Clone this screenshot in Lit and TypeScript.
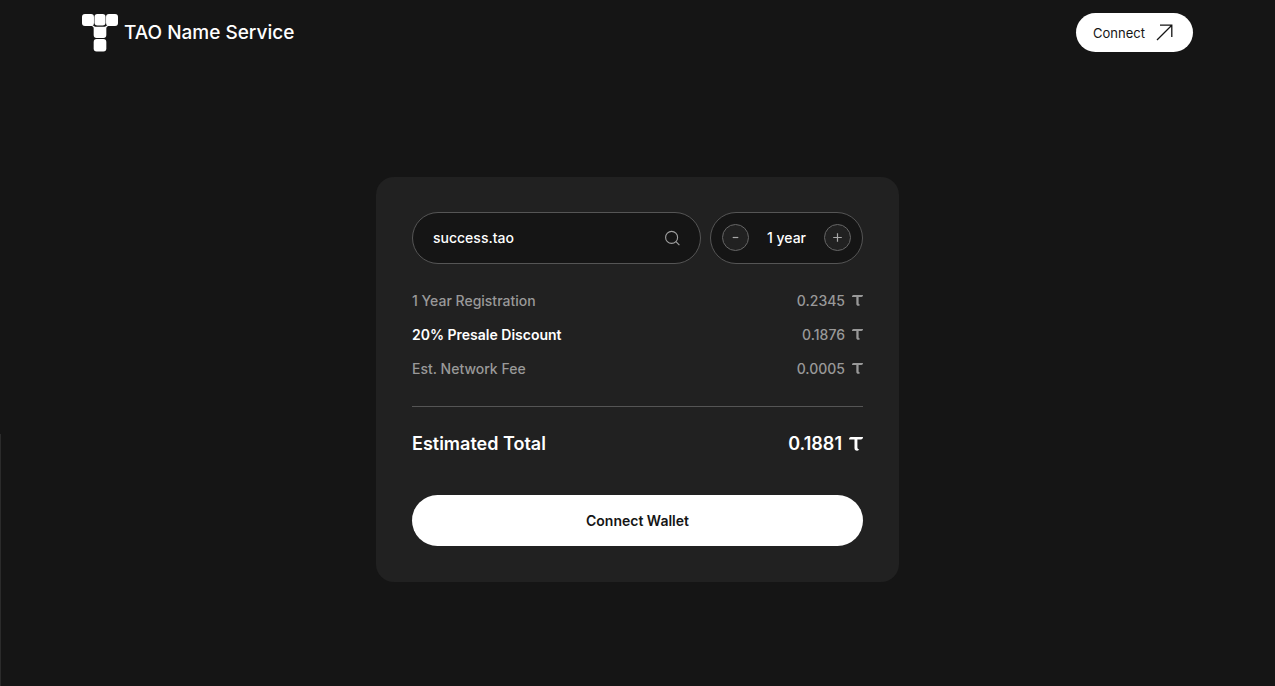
import { LitElement, html, css, svg } from "lit";
import { customElement, property, state } from "lit/decorators.js";
import { classMap } from "lit/directives/class-map.js";

interface PriceLine {
  label: string;
  amount: string;
  strong?: boolean;
}

const LINES: PriceLine[] = [
  { label: "1 Year Registration", amount: "0.2345" },
  { label: "20% Presale Discount", amount: "0.1876", strong: true },
  { label: "Est. Network Fee", amount: "0.0005" },
];

@customElement("tao-symbol")
export class TaoSymbol extends LitElement {
  @property({ type: Number }) size = 11;

  static styles = css`
    :host {
      display: flex;
    }
  `;

  render() {
    return html`<svg width=${this.size} height=${this.size} viewBox="0 0 14 14" fill="currentColor" role="img" aria-label="TAO">
      <path d="M1.8 0H14C14 1.5 13.2 2.4 11.9 2.4H8.4V10.2C8.4 11.500 8.900 12.200 10.300 12.300C9.800 13.200 9.200 13.700 8.100 13.700C6.400 13.700 5.500 12.700 5.500 11V2.400H0C0 .9.7 0 1.8 0Z" />
    </svg>`;
  }
}

@customElement("site-header")
export class SiteHeader extends LitElement {
  static styles = css`
    :host {
      display: block;
    }
    .bar {
      display: flex;
      align-items: center;
      justify-content: space-between;
      padding: 13px 82px;
    }
    .brand {
      display: flex;
      align-items: center;
      gap: 6px;
      color: #fff;
      font-size: 19px;
      line-height: 25px;
      font-weight: 500;
      text-decoration: none;
    }
    .connect {
      display: flex;
      align-items: center;
      gap: 11px;
      height: 39px;
      padding: 0 20px 0 17px;
      border: 0;
      border-radius: 20px;
      background: #fff;
      color: #151515;
      font: inherit;
      font-size: 13px;
      cursor: pointer;
    }
  `;

  render() {
    const block = (x: number, y: number, w: number, h: number) =>
      svg`<rect x=${x} y=${y} width=${w} height=${h} rx="3" />`;
    return html`<header class="bar">
      <a class="brand" href="#">
        <svg width="36" height="39" viewBox="0 0 37 39" preserveAspectRatio="none" fill="#fff" aria-hidden="true">
          ${block(0, 1, 12.3, 12)} ${block(24.7, 1, 12.3, 12)}
          <path d="M9 11L12.5 13.2Q13.5 13.8 15 13.8H22Q23.500 13.8 24.500 13.200L28 11V12.500L26 13.500Q25 14 25 15.500V22Q25 25 22 25H15Q12 25 12 22V15.500Q12 14 11 13.500L9 12.500Z" />
          ${block(12.8, 1, 11.4, 11.6)} ${block(12, 26, 13, 12.6)}
        </svg>
        <span>TAO Name Service</span>
      </a>
      <button class="connect" type="button">
        Connect
        <svg width="17" height="17" viewBox="0 0 17 17" fill="none" stroke="#151515" stroke-width="1.3" aria-hidden="true">
          <path d="M1 16L15.8 1.2M4 1.2H15.8V13" />
        </svg>
      </button>
    </header>`;
  }
}

@customElement("register-card")
export class RegisterCard extends LitElement {
  @state() private years = 1;

  static styles = css`
    :host {
      display: block;
      width: 100%;
      max-width: 523px;
    }
    .card {
      box-sizing: border-box;
      padding: 35px 36px 36px;
      border-radius: 18px;
      background: #212121;
    }
    .fields {
      display: flex;
      gap: 9px;
    }
    .field {
      box-sizing: border-box;
      display: flex;
      align-items: center;
      height: 52px;
      border: 1px solid #555;
      border-radius: 26px;
      background: #151515;
    }
    .search {
      flex: 1;
      min-width: 0;
      padding: 0 20px;
    }
    .name {
      flex: 1;
      min-width: 0;
      padding: 0;
      border: 0;
      outline: 0;
      background: none;
      color: #fff;
      font: inherit;
      font-size: 14px;
      line-height: 20px;
      font-weight: 500;
    }
    .icon {
      display: flex;
      padding: 0;
      border: 0;
      background: none;
      color: #a0a0a0;
      cursor: pointer;
    }
    .stepper {
      justify-content: space-between;
      width: 153px;
      padding: 0 11px;
      color: #fff;
      font-size: 14px;
      line-height: 20px;
      font-weight: 500;
    }
    .step {
      box-sizing: border-box;
      display: flex;
      align-items: center;
      justify-content: center;
      width: 27px;
      height: 27px;
      padding: 0;
      border: 1px solid #666;
      border-radius: 50%;
      background: #212121;
      color: #a8a8a8;
      cursor: pointer;
    }
    .lines {
      display: grid;
      gap: 14px;
      margin: 0;
      padding: 27px 0;
      border-bottom: 1px solid #555;
    }
    .line {
      display: flex;
      justify-content: space-between;
      color: #999;
      font-size: 14px;
      line-height: 20px;
      font-weight: 500;
    }
    .strong {
      color: #fff;
      font-weight: 600;
    }
    .amount {
      display: flex;
      align-items: center;
      gap: 7px;
      margin: 0;
    }
    .total {
      display: flex;
      justify-content: space-between;
      margin: 0;
      padding: 25px 0 39px;
      color: #fff;
      font-size: 18px;
      line-height: 24px;
      font-weight: 600;
    }
    .wallet {
      width: 100%;
      height: 51px;
      border: 0;
      border-radius: 26px;
      background: #fff;
      color: #151515;
      font: inherit;
      font-size: 14px;
      font-weight: 600;
      cursor: pointer;
    }
  `;

  private change(by: number) {
    this.years = Math.max(1, this.years + by);
  }

  render() {
    return html`<section class="card">
      <div class="fields">
        <div class="field search">
          <input class="name" type="text" aria-label="Domain name" value="success.tao" spellcheck="false" />
          <button class="icon" type="button" aria-label="Search">
            <svg width="16" height="16" viewBox="0 0 16 16" fill="none" stroke="currentColor" stroke-width="1.1">
              <circle cx="7.6" cy="7.4" r="6" />
              <path d="M11.9 11.7L15.4 15.2" />
            </svg>
          </button>
        </div>
        <div class="field stepper">
          <button class="step" type="button" aria-label="Fewer years" @click=${() => this.change(-1)}>
            <svg width="9" height="9" viewBox="0 0 9 9" stroke="currentColor" stroke-width="1.2">
              <path d="M1.7 4.5H7.3" />
            </svg>
          </button>
          <span>${this.years} ${this.years === 1 ? "year" : "years"}</span>
          <button class="step" type="button" aria-label="More years" @click=${() => this.change(1)}>
            <svg width="9" height="9" viewBox="0 0 9 9" stroke="currentColor" stroke-width="1.2">
              <path d="M.2 4.5H8.8M4.5 .2V8.8" />
            </svg>
          </button>
        </div>
      </div>
      <dl class="lines">
        ${LINES.map(
          (line) => html`<div class="line">
            <dt class=${classMap({ strong: !!line.strong })}>${line.label}</dt>
            <dd class="amount">${line.amount}<tao-symbol size="11"></tao-symbol></dd>
          </div>`
        )}
      </dl>
      <p class="total">
        <span>Estimated Total</span>
        <span class="amount">0.1881<tao-symbol size="14"></tao-symbol></span>
      </p>
      <button class="wallet" type="button">Connect Wallet</button>
    </section>`;
  }
}

@customElement("app-root")
export class AppRoot extends LitElement {
  static styles = css`
    :host {
      box-sizing: border-box;
      display: flex;
      flex-direction: column;
      min-height: 100vh;
      background: linear-gradient(#2b2b2b, #2b2b2b) left bottom / 1px 252px no-repeat #151515;
      font-family: Inter, "Liberation Sans", sans-serif;
    }
    .main {
      flex: 1;
      display: flex;
      align-items: center;
      justify-content: center;
      padding: 7px 20px 0;
    }
  `;

  render() {
    return html`<site-header></site-header>
      <main class="main"><register-card></register-card></main>`;
  }
}
